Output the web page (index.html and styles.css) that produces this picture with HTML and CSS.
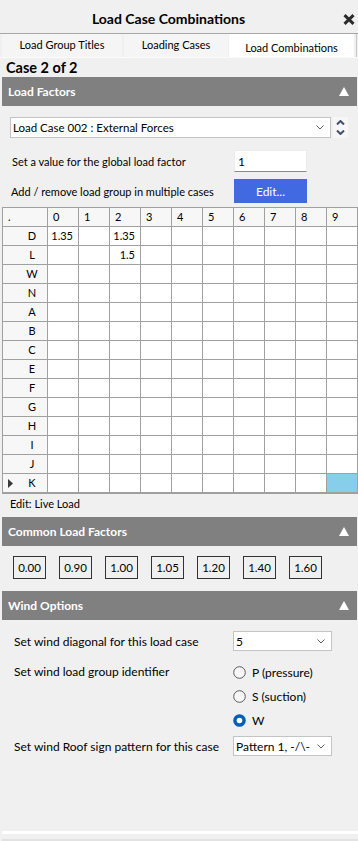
FILE: index.html
```html
<html>
  <head>
    <title>Load Case Combinations</title>
    <meta content="text/html;charset=utf-8" http-equiv="Content-Type">
    <link rel="stylesheet" href="styles.css">
  </head>
  <body>
    <div class="window">
      <div class="titlebar">
        <div class="title">Load Case Combinations</div>
        <div class="close">
          <svg width="12" height="11" viewBox="0 0 12 11"><path d="M1.5 1.2 L10.5 9.8 M10.5 1.2 L1.5 9.8" stroke="#2b2b2b" stroke-width="3"/></svg>
        </div>
      </div>

      <div class="tabs">
        <div class="tab t1">Load Group Titles</div>
        <div class="tab t2">Loading Cases</div>
        <div class="tab t3 active">Load Combinations</div>
        <div class="tab-edge"></div>
      </div>

      <div class="panel">
        <div class="case">Case 2 of 2</div>

        <!-- load factors -->
        <div class="section-head">
          <span>Load Factors</span>
          <svg width="10" height="9" viewBox="0 0 10 9"><polygon points="5,0 10,9 0,9" fill="#fff"/></svg>
        </div>

        <div class="case-pick">
          <div class="combo wide">
            <span>Load Case 002 : External Forces</span>
            <svg width="8" height="5" viewBox="0 0 8 5"><polyline points="0.5,0.5 4,4 7.5,0.5" fill="none" stroke="#606060"/></svg>
          </div>
          <div class="spin">
            <svg width="9" height="5" viewBox="0 0 9 5"><polyline points="1,4.5 4.5,1 8,4.5" fill="none" stroke="#3f4d6e" stroke-width="2"/></svg>
            <svg width="9" height="5" viewBox="0 0 9 5"><polyline points="1,0.5 4.5,4 8,0.5" fill="none" stroke="#3f4d6e" stroke-width="2"/></svg>
          </div>
        </div>

        <div class="form-row r-global">
          <label>Set a value for the global load factor</label>
          <div class="textbox">1</div>
        </div>
        <div class="form-row r-edit">
          <label>Add / remove load group in multiple cases</label>
          <button class="blue-btn">Edit...</button>
        </div>

        <div class="grid">
          <div class="h">.</div><div class="h">0</div><div class="h">1</div><div class="h">2</div><div class="h">3</div><div class="h">4</div><div class="h">5</div><div class="h">6</div><div class="h">7</div><div class="h">8</div><div class="h">9</div>
          <div class="r">D</div><div class="v">1.35</div><div></div><div class="v">1.35</div><div></div><div></div><div></div><div></div><div></div><div></div><div></div>
          <div class="r">L</div><div></div><div></div><div class="v">1.5</div><div></div><div></div><div></div><div></div><div></div><div></div><div></div>
          <div class="r">W</div><div></div><div></div><div></div><div></div><div></div><div></div><div></div><div></div><div></div><div></div>
          <div class="r">N</div><div></div><div></div><div></div><div></div><div></div><div></div><div></div><div></div><div></div><div></div>
          <div class="r">A</div><div></div><div></div><div></div><div></div><div></div><div></div><div></div><div></div><div></div><div></div>
          <div class="r">B</div><div></div><div></div><div></div><div></div><div></div><div></div><div></div><div></div><div></div><div></div>
          <div class="r">C</div><div></div><div></div><div></div><div></div><div></div><div></div><div></div><div></div><div></div><div></div>
          <div class="r">E</div><div></div><div></div><div></div><div></div><div></div><div></div><div></div><div></div><div></div><div></div>
          <div class="r">F</div><div></div><div></div><div></div><div></div><div></div><div></div><div></div><div></div><div></div><div></div>
          <div class="r">G</div><div></div><div></div><div></div><div></div><div></div><div></div><div></div><div></div><div></div><div></div>
          <div class="r">H</div><div></div><div></div><div></div><div></div><div></div><div></div><div></div><div></div><div></div><div></div>
          <div class="r">I</div><div></div><div></div><div></div><div></div><div></div><div></div><div></div><div></div><div></div><div></div>
          <div class="r">J</div><div></div><div></div><div></div><div></div><div></div><div></div><div></div><div></div><div></div><div></div>
          <div class="r"><svg class="ptr" width="5" height="9" viewBox="0 0 5 9"><polygon points="0,0 5,4.5 0,9" fill="#3a3a3a"/></svg>K</div><div></div><div></div><div></div><div></div><div></div><div></div><div></div><div></div><div></div><div class="sel"></div>
        </div>
        <div class="status">Edit: Live Load</div>

        <!-- common load factors -->
        <div class="section-head s-common">
          <span>Common Load Factors</span>
          <svg width="10" height="9" viewBox="0 0 10 9"><polygon points="5,0 10,9 0,9" fill="#fff"/></svg>
        </div>
        <div class="factors">
          <button>0.00</button>
          <button>0.90</button>
          <button>1.00</button>
          <button>1.05</button>
          <button>1.20</button>
          <button>1.40</button>
          <button>1.60</button>
        </div>

        <!-- wind options -->
        <div class="section-head s-wind">
          <span>Wind Options</span>
          <svg width="10" height="9" viewBox="0 0 10 9"><polygon points="5,0 10,9 0,9" fill="#fff"/></svg>
        </div>
        <div class="wind-row r-diag">
          <label>Set wind diagonal for this load case</label>
          <div class="combo small">
            <span>5</span>
            <svg width="8" height="5" viewBox="0 0 8 5"><polyline points="0.5,0.5 4,4 7.5,0.5" fill="none" stroke="#606060"/></svg>
          </div>
        </div>
        <div class="wind-row r-ident">
          <label>Set wind load group identifier</label>
          <div class="radios">
            <div class="radio">
              <svg width="13" height="13" viewBox="0 0 13 13"><circle cx="6.5" cy="6.5" r="5.8" fill="#f6f6f6" stroke="#5a5a5a"/></svg>
              <span>P (pressure)</span>
            </div>
            <div class="radio">
              <svg width="13" height="13" viewBox="0 0 13 13"><circle cx="6.5" cy="6.5" r="5.8" fill="#f6f6f6" stroke="#5a5a5a"/></svg>
              <span>S (suction)</span>
            </div>
            <div class="radio">
              <svg width="13" height="13" viewBox="0 0 13 13"><circle cx="6.5" cy="6.5" r="6.3" fill="#005fb8"/><circle cx="6.5" cy="6.5" r="2.8" fill="#fff"/></svg>
              <span>W</span>
            </div>
          </div>
        </div>
        <div class="wind-row r-roof">
          <label>Set wind Roof sign pattern for this case</label>
          <div class="combo small">
            <span>Pattern 1, -/\-</span>
            <svg width="8" height="5" viewBox="0 0 8 5"><polyline points="0.5,0.5 4,4 7.5,0.5" fill="none" stroke="#606060"/></svg>
          </div>
        </div>

        <div class="footer"></div>
      </div>
    </div>
  </body>
</html>
```

FILE: styles.css
```css
* {
  box-sizing: border-box;
}
body {
  margin: 0;
  background-color: #f0f0f0;
  font-family: Lato, "Noto Sans", sans-serif;
  font-size: 11px;
  color: #000;
}
.window {
  width: 358px;
  height: 841px;
  display: flex;
  flex-direction: column;
}

/* title bar */
.titlebar {
  height: 33px;
  display: flex;
}
.title {
  flex: 1;
  text-align: center;
  font-size: 14px;
  font-weight: 700;
  line-height: 16px;
  padding-top: 11px;
}
.close {
  width: 21px;
  padding: 14px 0 0 6px;
}

/* tabs */
.tabs {
  height: 24px;
  display: flex;
  border-top: 1px solid #a7a7a7;
  font-size: 11px;
}
.tab {
  height: 23px;
  line-height: 22px;
  text-align: center;
  background-color: #f5f5f5;
}
.t1 {
  width: 120px;
  margin-left: 2px;
}
.t2 {
  width: 104px;
  margin-left: 2px;
}
.t3 {
  width: 125px;
  margin-left: 1px;
}
.tab.active {
  background-color: #fff;
  padding-top: 3px;
}
.tab-edge {
  width: 1px;
  margin-left: auto;
  margin-right: 1px;
  background-color: #c9c9c9;
}

/* panel */
.panel {
  flex: 1;
  display: flex;
  flex-direction: column;
  border-top: 1px solid #fbfbfb;
  padding-left: 2px;
}
.case {
  height: 19px;
  line-height: 19px;
  padding-left: 4px;
  font-size: 14.5px;
  font-weight: 700;
}
.section-head {
  height: 29px;
  margin-right: 1px;
  padding: 0 8px 0 6px;
  display: flex;
  align-items: center;
  justify-content: space-between;
  background-color: #808080;
  color: #fff;
  font-size: 12px;
  font-weight: 700;
}

/* combo boxes */
.combo {
  display: flex;
  align-items: center;
  justify-content: space-between;
  background-color: #fff;
  border: 1px solid #c4c4c4;
  padding: 0 6px 0 2px;
}
.combo.wide {
  width: 321px;
  height: 21px;
  font-size: 11.5px;
}
.combo.small {
  width: 99px;
  height: 20px;
  font-size: 12px;
}
.case-pick {
  display: flex;
  margin: 11px 0 0 8px;
}
.spin {
  width: 15px;
  height: 21px;
  margin-left: 2px;
  background-color: #f6f6f6;
  display: flex;
  flex-direction: column;
  align-items: center;
  justify-content: center;
  gap: 5px;
}

/* label rows */
.form-row {
  display: flex;
  align-items: center;
}
.form-row label {
  width: 232px;
}
.r-global {
  margin-top: 12px;
}
.r-global label {
  padding-left: 10px;
}
.r-edit {
  margin-top: 7px;
}
.r-edit label {
  padding-left: 9px;
}
.textbox {
  width: 73px;
  height: 22px;
  line-height: 21px;
  padding-left: 3px;
  background-color: #fff;
  border: 1px solid #ececec;
  border-bottom-color: #8a8a8a;
  font-size: 12px;
}
.blue-btn {
  width: 73px;
  height: 24px;
  border: 0;
  background-color: #4169e1;
  color: #fff;
  font-family: inherit;
  font-size: 12px;
  padding: 0;
}

/* factor grid */
.grid {
  width: 356px;
  margin-top: 4px;
  display: grid;
  grid-template-columns: 44px repeat(10, 30px);
  grid-auto-rows: 18px;
  gap: 1px;
  background-color: #a0a0a0;
  border: 1px solid #a0a0a0;
  border-bottom-width: 2px;
  font-size: 11px;
}
.grid div {
  background-color: #fff;
  line-height: 18px;
}
.grid .h {
  background-color: #f7f7f7;
  padding-left: 5px;
}
.grid .r {
  position: relative;
  background-color: #f7f7f7;
  text-align: center;
  padding-left: 14px;
}
.grid .v {
  text-align: right;
  padding-right: 5px;
}
.grid .sel {
  background-color: #87ceeb;
}
.ptr {
  position: absolute;
  left: 5px;
  top: 5px;
}
.status {
  height: 20px;
  line-height: 20px;
  padding-left: 8px;
}
.s-common {
  margin-top: 3px;
}

/* common factors */
.factors {
  display: flex;
  gap: 13px;
  margin: 10px 0 0 11px;
}
.factors button {
  width: 33px;
  height: 23px;
  padding: 0;
  border: 1px solid #333;
  background-color: #f0f0f0;
  font-family: inherit;
  font-size: 11.5px;
  line-height: 21px;
}
.s-wind {
  margin-top: 12px;
}

/* wind options */
.wind-row {
  display: flex;
  font-size: 12px;
}
.wind-row label {
  width: 231px;
  padding-left: 12px;
}
.r-diag {
  margin-top: 11px;
  align-items: center;
}
.r-ident {
  margin-top: 9px;
}
.r-ident label {
  line-height: 24px;
}
.radio {
  height: 24px;
  display: flex;
  align-items: center;
  gap: 6px;
}
.r-roof {
  margin-top: 4px;
  align-items: center;
}

.footer {
  margin-top: auto;
  height: 10px;
  border-top: 3px solid #fff;
  border-bottom: 2px solid #e2e2e2;
}
```
